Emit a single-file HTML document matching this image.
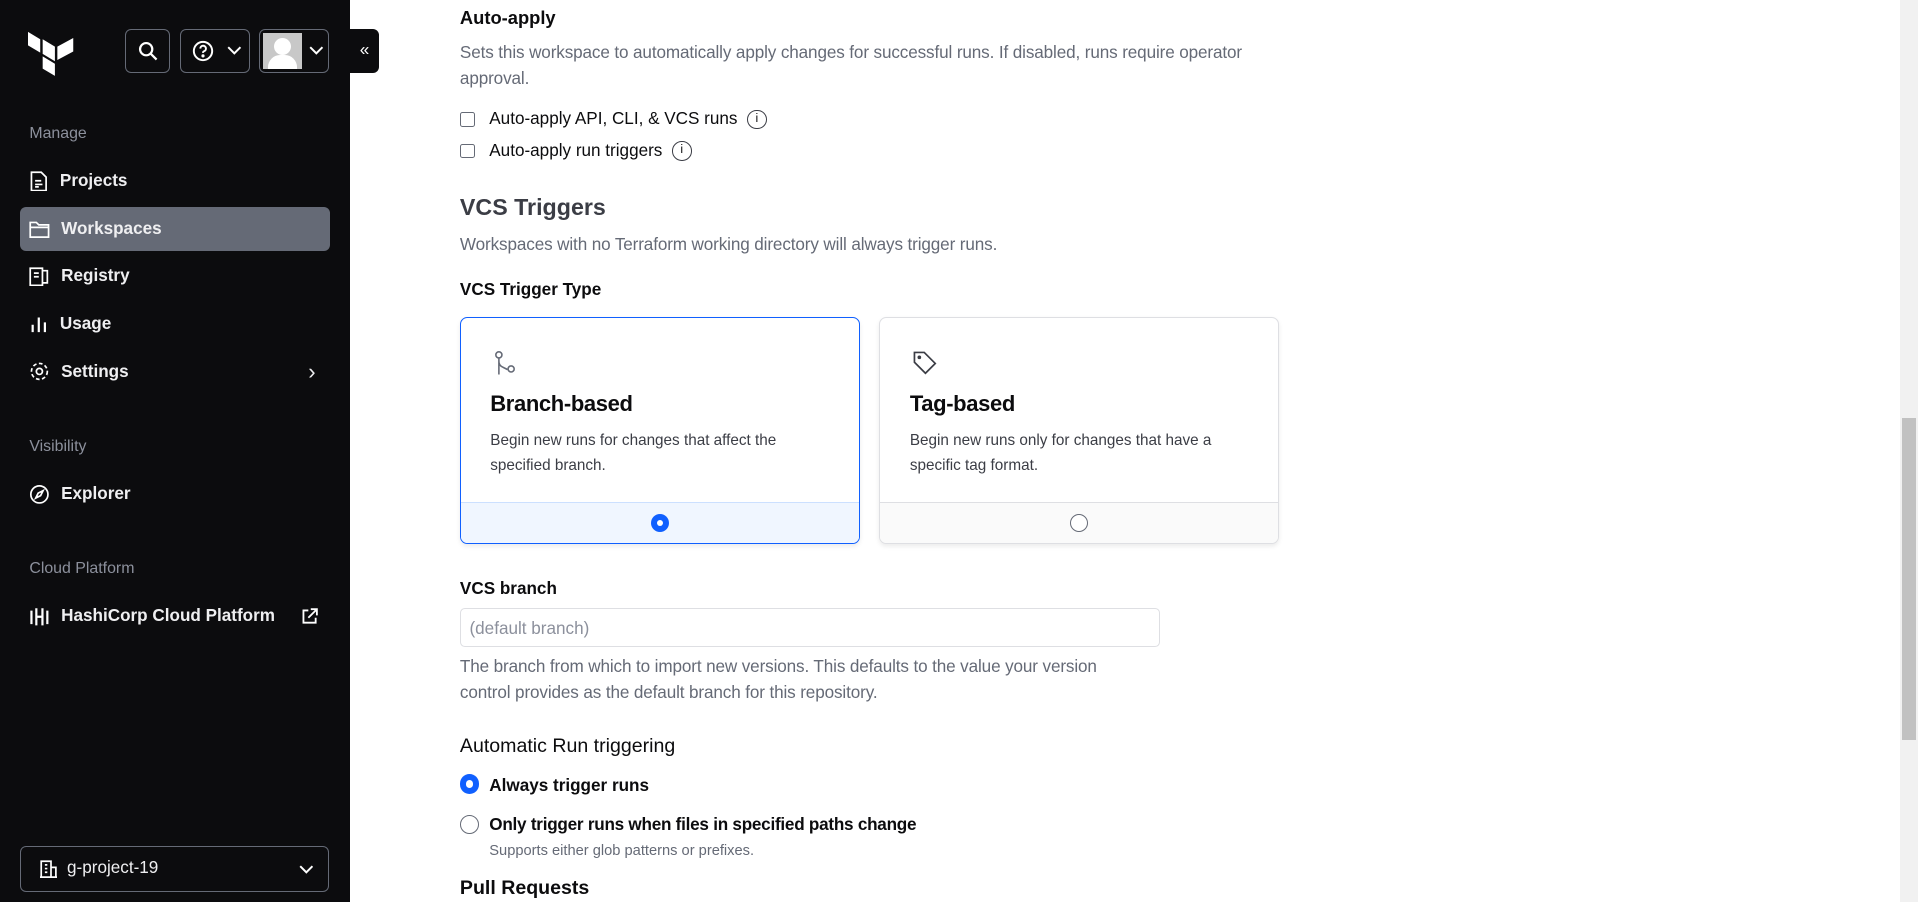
<!DOCTYPE html>
<html><head><meta charset="utf-8"><style>
*{box-sizing:border-box;margin:0;padding:0}
html,body{width:1918px;height:902px;overflow:hidden;background:#fff}
#w{zoom:1.22321;width:1568px;height:737px;position:relative;font-family:"Liberation Sans",sans-serif;color:#3b3d45}
.sb{position:absolute;left:0;top:0;width:286px;height:737px;background:#0c0c0e;color:#efeff1}
.btn{position:absolute;top:24px;height:36px;border:1px solid #656a76;border-radius:5px}
.nav{position:absolute;left:16px;width:254px;height:36px;border-radius:5px;display:flex;align-items:center;padding-left:8px;font-size:14px;font-weight:bold;color:#efeff1}
.nav svg{margin-right:9px}
.hd{position:absolute;left:24px;font-size:13px;color:#8c909c}
.m{position:absolute;left:376px}
.t{font-size:14px;color:#656a76;letter-spacing:-0.1px}
.cb{width:12px;height:12px;border:1px solid #656a76;border-radius:2px;display:inline-block;vertical-align:middle;margin-right:12px}
.card{position:absolute;top:259px;width:327px;height:186px;border-radius:6px;background:#fff;overflow:hidden;box-shadow:0 2px 4px rgba(0,0,0,.08)}
.card h3{position:absolute;left:24px;top:60px;font-size:18px;color:#0c0c0e;letter-spacing:-0.3px}
.card p{position:absolute;left:24px;top:91px;width:280px;font-size:12.5px;line-height:20px;color:#3b3d45}
.card .ft{position:absolute;left:0;right:0;bottom:0;height:34px;border-top:1px solid}
</style></head><body><div id="w">
<div class="sb">
<svg style="position:absolute;left:23px;top:22px" width="38" height="40" viewBox="0 0 38 40"><path fill="#fff" d="M0 4l10 6v11L0 15zM12 10l10 6v12l-10-6zM24 16l13-7v11l-13 7zM12 24l10 6v10l-10-6z"/></svg>
<div class="btn" style="left:102px;width:37px"><svg style="position:absolute;left:9px;top:8px" width="18" height="18" viewBox="0 0 18 18" fill="none" stroke="#fff" stroke-width="1.8"><circle cx="7.5" cy="7.5" r="5"/><path d="M11 11l5 5"/></svg></div>
<div class="btn" style="left:147px;width:57px"><svg style="position:absolute;left:9px;top:8px" width="18" height="18" viewBox="0 0 18 18" fill="none" stroke="#fff" stroke-width="1.6"><circle cx="9" cy="9" r="7.5"/><path d="M6.8 7a2.3 2.3 0 1 1 3 2.2c-.6.3-.8.7-.8 1.3"/><circle cx="9" cy="13" r=".5" fill="#fff"/></svg><svg style="position:absolute;left:38px;top:13px" width="12" height="8" viewBox="0 0 12 8" fill="none" stroke="#fff" stroke-width="1.6"><path d="M1 1l5 5 5-5"/></svg></div>
<div class="btn" style="left:212px;width:57px"><div style="position:absolute;left:2px;top:2px;width:32px;height:30px;background:#c8c8c8;overflow:hidden"><div style="position:absolute;left:9px;top:4px;width:14px;height:14px;border-radius:50%;background:#fff"></div><div style="position:absolute;left:4px;top:18px;width:24px;height:16px;border-radius:10px 10px 0 0;background:#fff"></div></div><svg style="position:absolute;left:40px;top:13px" width="12" height="8" viewBox="0 0 12 8" fill="none" stroke="#fff" stroke-width="1.6"><path d="M1 1l5 5 5-5"/></svg></div>
<div style="position:absolute;left:286px;top:24px;width:24px;height:36px;background:#0c0c0e;border-radius:0 5px 5px 0;color:#fff;font-size:14px;text-align:center;line-height:34px">«</div>
<div class="hd" style="top:102px">Manage</div>
<div class="nav" style="top:130px"><svg width="16" height="17" viewBox="0 0 16 17" fill="none" stroke="#fff" stroke-width="1.4"><path d="M2 1h8l4 4v11H2z M5 8h5M5 11h6M5 13h3"/></svg>Projects</div>
<div class="nav" style="top:169px;background:#656a76"><svg width="17" height="15" viewBox="0 0 17 15" fill="none" stroke="#fff" stroke-width="1.4"><path d="M1 2h5l2 2h8v10H1zM1 6h15"/></svg>Workspaces</div>
<div class="nav" style="top:208px"><svg width="17" height="16" viewBox="0 0 17 16" fill="none" stroke="#fff" stroke-width="1.4"><path d="M1 1h10v14H1zM11 3h4v10h-4M4 5h4M4 8h4"/></svg>Registry</div>
<div class="nav" style="top:247px"><svg width="16" height="15" viewBox="0 0 16 15" fill="none" stroke="#fff" stroke-width="1.8"><path d="M3 8v6M8 2v12M13 6v8"/></svg>Usage</div>
<div class="nav" style="top:286px"><svg width="17" height="17" viewBox="0 0 17 17" fill="none" stroke="#fff" stroke-width="1.4"><circle cx="8.5" cy="8.5" r="2.5"/><circle cx="8.5" cy="8.5" r="6.5" stroke-dasharray="3 2"/></svg>Settings<span style="position:absolute;right:12px;font-weight:normal;font-size:18px">›</span></div>
<div class="hd" style="top:358px">Visibility</div>
<div class="nav" style="top:386px"><svg width="17" height="17" viewBox="0 0 17 17" fill="none" stroke="#fff" stroke-width="1.4"><circle cx="8.5" cy="8.5" r="7"/><path d="M11.5 5.5l-2 4-4 2 2-4z"/></svg>Explorer</div>
<div class="hd" style="top:458px">Cloud Platform</div>
<div class="nav" style="top:486px"><svg width="17" height="16" viewBox="0 0 17 16" fill="none" stroke="#fff" stroke-width="1.8"><path d="M2 3v11M6 1v14M11 1v14M15 3v11M6 8h5"/></svg>HashiCorp Cloud Platform<svg style="position:absolute;right:10px;margin:0" width="14" height="14" viewBox="0 0 14 14" fill="none" stroke="#fff" stroke-width="1.5"><path d="M6 2H2v10h10V8M8 1h5v5M13 1L6 8"/></svg></div>
<div style="position:absolute;left:16px;top:692px;width:253px;height:37px;border:1px solid #656a76;border-radius:5px;font-size:14px;line-height:35px;padding-left:38px">g-project-19<svg style="position:absolute;left:16px;top:10px" width="14" height="15" viewBox="0 0 14 15" fill="none" stroke="#fff" stroke-width="1.4"><path d="M1 14V1h8v13M9 6h4v8M0 14h14M4 4h2M4 7h2M4 10h2"/></svg><svg style="position:absolute;right:12px;top:14px" width="12" height="8" viewBox="0 0 12 8" fill="none" stroke="#fff" stroke-width="1.6"><path d="M1 1l5 5 5-5"/></svg></div>
</div>

<div class="m" style="top:6px;font-size:15px;font-weight:bold;color:#0c0c0e">Auto-apply</div>
<div class="m t" style="top:33px;width:680px;line-height:21px">Sets this workspace to automatically apply changes for successful runs. If disabled, runs require operator approval.</div>
<div class="m" style="top:89px;font-size:14px;color:#0c0c0e"><span class="cb"></span>Auto-apply API, CLI, &amp; VCS runs <span style="display:inline-block;width:16px;height:16px;border:1.4px solid #3b3d45;border-radius:50%;font-size:10px;text-align:center;line-height:13px;vertical-align:middle;margin-left:4px">i</span></div>
<div class="m" style="top:115px;font-size:14px;color:#0c0c0e"><span class="cb"></span>Auto-apply run triggers <span style="display:inline-block;width:16px;height:16px;border:1.4px solid #3b3d45;border-radius:50%;font-size:10px;text-align:center;line-height:13px;vertical-align:middle;margin-left:4px">i</span></div>
<div class="m" style="top:159px;font-size:19px;font-weight:bold;color:#3b3d45">VCS Triggers</div>
<div class="m t" style="top:192px">Workspaces with no Terraform working directory will always trigger runs.</div>
<div class="m" style="top:229px;font-size:14px;font-weight:bold;color:#0c0c0e">VCS Trigger Type</div>
<div class="card" style="left:376px;border:1px solid #1060ff"><svg style="position:absolute;left:27px;top:26px" width="20" height="22" viewBox="0 0 20 22" fill="none" stroke="#656a76" stroke-width="1.3"><circle cx="4" cy="4" r="2.5"/><path d="M4 6.5V20M4 9c0 5 4 5 7 7"/><circle cx="14" cy="15.5" r="2.5"/></svg><h3>Branch-based</h3><p>Begin new runs for changes that affect the specified branch.</p><div class="ft" style="background:#f0f6ff;border-color:#cce0ff"><div style="position:absolute;left:155px;top:9px;width:15px;height:15px;border-radius:50%;background:#1060ff"><div style="position:absolute;left:5px;top:5px;width:5px;height:5px;border-radius:50%;background:#fff"></div></div></div></div>
<div class="card" style="left:719px;border:1px solid #dedfe3"><svg style="position:absolute;left:26px;top:26px" width="22" height="22" viewBox="0 0 22 22" fill="none" stroke="#3b3d45" stroke-width="1.4"><path d="M2 2h8l9 9-8 8-9-9z"/><circle cx="6" cy="6" r=".8" fill="#3b3d45"/></svg><h3>Tag-based</h3><p>Begin new runs only for changes that have a specific tag format.</p><div class="ft" style="background:#fafafa;border-color:#dedfe3"><div style="position:absolute;left:155px;top:9px;width:15px;height:15px;border-radius:50%;border:1px solid #656a76;background:#fff"></div></div></div>
<div class="m" style="top:473px;font-size:14px;font-weight:bold;color:#0c0c0e">VCS branch</div>
<div class="m" style="top:497px;width:572px;height:32px;border:1px solid #dedfe3;border-radius:4px;font-size:14px;color:#8c909c;padding:8px 7px">(default branch)</div>
<div class="m t" style="top:535px;width:560px;line-height:21px">The branch from which to import new versions. This defaults to the value your version control provides as the default branch for this repository.</div>
<div class="m" style="top:601px;font-size:16px;color:#0c0c0e">Automatic Run triggering</div>
<div class="m" style="top:633px;width:16px;height:16px;border-radius:50%;background:#1060ff"><div style="position:absolute;left:5px;top:5px;width:6px;height:6px;border-radius:50%;background:#fff"></div></div>
<div class="m" style="left:400px;top:634px;font-size:14px;font-weight:bold;color:#0c0c0e">Always trigger runs</div>
<div class="m" style="top:666px;width:16px;height:16px;border-radius:50%;border:1px solid #656a76"></div>
<div class="m" style="left:400px;top:666px;font-size:14px;font-weight:bold;color:#0c0c0e;letter-spacing:-0.2px">Only trigger runs when files in specified paths change</div>
<div class="m" style="left:400px;top:689px;font-size:12px;color:#656a76">Supports either glob patterns or prefixes.</div>
<div class="m" style="top:717px;font-size:16px;font-weight:bold;color:#0c0c0e">Pull Requests</div>
<div style="position:absolute;left:1553px;top:0;width:15px;height:737px;background:#f1f1f1"><div style="position:absolute;left:2px;top:342px;width:11px;height:263px;background:#c1c1c1"></div></div>
</div></body></html>
